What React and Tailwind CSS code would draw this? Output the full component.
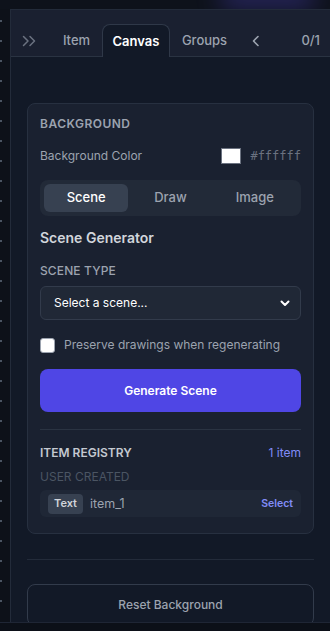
import React from "react";

const Chevrons = () => (
  <svg width="16" height="12" viewBox="0 0 16 12" fill="none" stroke="currentColor" strokeWidth="1.5" strokeLinecap="round" strokeLinejoin="round">
    <path d="M1.5 1.5l4.5 4.5-4.5 4.5" />
    <path d="M8 1.5l4.5 4.5-4.5 4.5" />
  </svg>
);

const App = () => {
  const dots = Array.from({ length: 30 });

  return (
    <div className="w-[330px] h-[631px] flex flex-col bg-[#0c1018] overflow-hidden" style={{ fontFamily: "Inter, 'Noto Sans', sans-serif" }}>
      {/* top strip */}
      <div className="relative h-[9px] shrink-0 bg-[#0e121b] overflow-hidden">
        <div className="absolute left-[220px] -top-[10px] w-[95px] h-[16px] rounded-full bg-[#3a3490] blur-md opacity-80"></div>
      </div>

      <div className="flex flex-1 min-h-0">
        {/* left strip */}
        <div className="w-[10px] shrink-0 flex flex-col gap-[18px] pt-[11px] bg-[#0d1119]">
          {dots.map((_, i) => (
            <div key={i} className="w-[2px] h-[2px] bg-[#4b5563]"></div>
          ))}
        </div>

        {/* panel */}
        <div className="flex-1 min-w-0 flex flex-col border-l border-t border-[#232b3a] bg-[#121927]">
          {/* tabs */}
          <div className="h-[47px] shrink-0 flex items-end bg-[#1a2030] border-b border-[#2a3342] text-[13px] font-medium">
            <div className="w-[40px] h-[33px] flex items-center pl-[11px] pt-[3px] text-[#6b7280]">
              <Chevrons />
            </div>
            <div className="w-[51px] h-[33px] pt-[2px] flex items-center justify-center text-[#9ca3af]">Item</div>
            <div className="w-[68px] h-[33px] pt-[2px] -mb-px flex items-center justify-center rounded-t-lg border border-b-0 border-[#2f3848] bg-[#121927] text-white font-semibold">Canvas</div>
            <div className="w-[69px] h-[33px] pt-[2px] flex items-center justify-center text-[#9ca3af]">Groups</div>
            <div className="ml-[12px] h-[33px] pt-[2px] flex items-center text-[#9ca3af]">
              <svg width="9" height="12" viewBox="0 0 9 12" fill="none" stroke="currentColor" strokeWidth="1.6" strokeLinecap="round" strokeLinejoin="round">
                <path d="M7 1.5L2.5 6 7 10.5" />
              </svg>
            </div>
            <div className="ml-auto mr-[10px] h-[33px] pt-[2px] flex items-center text-[#9ca3af]">0/1</div>
          </div>

          {/* content */}
          <div className="flex-1 min-h-0 px-4 pt-[46px]">
            <div className="rounded-lg border border-[#273040] bg-[#1a2130] px-3 pt-3 pb-4">
              <div className="h-4 text-[12px] leading-4 font-semibold tracking-[0.04em] text-[#9ca3af] uppercase">Background</div>

              <div className="mt-[14px] h-[20px] flex items-center justify-between">
                <span className="text-[12px] leading-5 text-[#9ca3af]">Background Color</span>
                <div className="flex items-center gap-[9px]">
                  <div className="w-[20px] h-[16px] bg-white border border-[#6b7280]"></div>
                  <span className="text-[12px] leading-4 text-[#6b7280]" style={{ fontFamily: "'DejaVu Sans Mono', monospace" }}>#ffffff</span>
                </div>
              </div>

              <div className="mt-[14px] h-[36px] p-1 rounded-lg bg-[#222a38] grid grid-cols-3 text-[13px] font-medium">
                <div className="rounded-md bg-[#374151] text-white flex items-center justify-center">Scene</div>
                <div className="flex items-center justify-center text-[#9ca3af]">Draw</div>
                <div className="flex items-center justify-center text-[#9ca3af]">Image</div>
              </div>

              <div className="mt-[12px] h-5 text-[14px] leading-5 font-semibold text-[#d1d5db]">Scene Generator</div>

              <div className="mt-[15px] h-4 text-[12px] leading-4 font-medium text-[#9ca3af] uppercase tracking-[0.01em]">Scene Type</div>

              <div className="mt-[7px] h-[34px] rounded-md border border-[#323b4b] bg-[#202836] flex items-center justify-between pl-[13px] pr-[10px]">
                <span className="text-[12px] leading-5 text-white">Select a scene...</span>
                <svg width="10" height="7" viewBox="0 0 10 7" fill="none" stroke="white" strokeWidth="2" strokeLinecap="round" strokeLinejoin="round">
                  <path d="M1.5 1.5l3.5 3.5 3.5-3.5" />
                </svg>
              </div>

              <div className="mt-[15px] h-[20px] flex items-center gap-[9px]">
                <div className="w-[15px] h-[15px] rounded-[3px] bg-white border border-[#9ca3af]"></div>
                <span className="text-[12px] leading-5 text-[#9ca3af]">Preserve drawings when regenerating</span>
              </div>

              <div className="mt-[14px] h-[43px] rounded-lg bg-[#4f46e5] flex items-center justify-center text-[12px] font-semibold text-white">
                Generate Scene
              </div>

              <div className="mt-[17px] border-t border-[#2a3342]"></div>

              <div className="mt-[15px] h-4 flex items-center justify-between">
                <span className="text-[12px] leading-4 font-semibold text-[#c4c9d1] uppercase">Item Registry</span>
                <span className="text-[12px] leading-4 text-[#818cf8]">1 item</span>
              </div>

              <div className="mt-[8px] h-4 text-[12px] leading-4 text-[#4b5563] uppercase">User Created</div>

              <div className="mt-[5px] h-[27px] rounded-md bg-[#1f2736] flex items-center px-[8px]">
                <span className="h-[20px] px-[6px] rounded bg-[#374151] text-[11px] font-semibold text-[#d1d5db] flex items-center">Text</span>
                <span className="ml-[7px] text-[12.5px] leading-5 text-[#9ca3af]">item_1</span>
                <span className="ml-auto text-[10.5px] font-semibold text-[#818cf8]">Select</span>
              </div>
            </div>

            <div className="mt-[25px] border-t border-[#232b3a]"></div>

            <div className="mt-[24px] h-[42px] rounded-lg border border-[#323b4b] flex items-center justify-center text-[12px] font-medium text-[#9ca3af]">
              Reset Background
            </div>
          </div>
        </div>
      </div>

      {/* bottom strip */}
      <div className="h-[9px] shrink-0 border-t border-[#1f2635] bg-[#0c1018]"></div>
    </div>
  );
};

export default App;
